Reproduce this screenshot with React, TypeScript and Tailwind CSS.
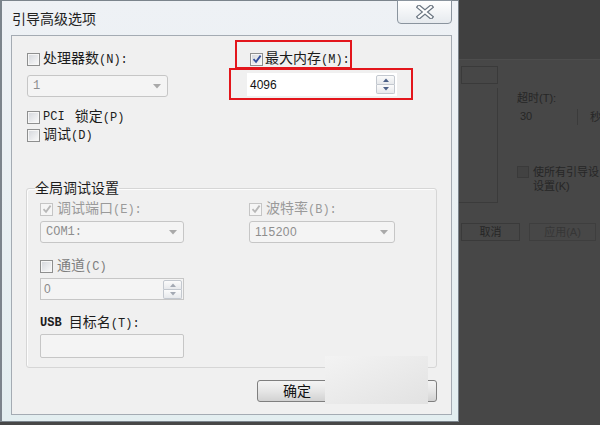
import React from "react";

type CheckProps = { checked?: boolean; disabled?: boolean };

// Win7-style 13px checkbox
function Check({ checked, disabled }: CheckProps) {
  return (
    <span
      className={
        disabled
          ? "flex h-[13px] w-[13px] shrink-0 items-center justify-center border border-[#c5c5c5] bg-[#f5f5f5]"
          : "flex h-[13px] w-[13px] shrink-0 items-center justify-center border border-[#8e8f8f] bg-gradient-to-br from-[#d3d6db] to-[#fbfbfb] shadow-[inset_0_0_0_1px_#f6f6f6]"
      }
    >
      {checked && (
        <svg width="10" height="10" viewBox="0 0 10 10">
          <path
            d="M1.5 5.2 L4 7.8 L8.6 1.6"
            fill="none"
            stroke={disabled ? "#b8b8b8" : "#34509c"}
            strokeWidth="1.8"
          />
        </svg>
      )}
    </span>
  );
}

type LabelProps = { zh: string; hot: string; tone?: string };

function Label({ zh, hot, tone = "text-[#1c1c1c]" }: LabelProps) {
  return (
    <span className={`whitespace-nowrap text-[14px] leading-[18px] ${tone}`}>
      {zh}
      <span className="font-['Liberation_Mono',monospace] text-[12px]">{hot}</span>
    </span>
  );
}

function Combo({ value, width, mono }: { value: string; width: string; mono?: boolean }) {
  return (
    <div
      className={`flex h-[22px] items-center justify-between rounded-[3px] border border-[#c6c6c6] bg-[#f4f4f4] pl-[5px] pr-[6px] text-[#8e8e8e] ${width}`}
    >
      <span
        className={
          mono
            ? "font-['Liberation_Mono',monospace] text-[12px]"
            : "text-[12px] tracking-[0.5px]"
        }
      >
        {value}
      </span>
      <svg width="8" height="5" viewBox="0 0 8 5">
        <path d="M0 0 H8 L4 4.5 Z" fill="#a9a9a9" />
      </svg>
    </div>
  );
}

function SpinButtons({ faded }: { faded?: boolean }) {
  const arrow = faded ? "#a3a9b3" : "#4b5f86";
  return (
    <div className="flex h-[19px] w-[19px] flex-col">
      <div className="flex flex-1 items-center justify-center rounded-t-[2px] border border-[#c3c8cf] bg-gradient-to-b from-[#fbfbfb] to-[#e7e9ec]">
        <svg width="6" height="4" viewBox="0 0 6 4">
          <path d="M0 4 L3 0.5 L6 4 Z" fill={arrow} />
        </svg>
      </div>
      <div className="flex flex-1 items-center justify-center rounded-b-[2px] border border-t-0 border-[#c3c8cf] bg-gradient-to-b from-[#fbfbfb] to-[#e7e9ec]">
        <svg width="6" height="4" viewBox="0 0 6 4">
          <path d="M0 0 L3 3.5 L6 0 Z" fill={arrow} />
        </svg>
      </div>
    </div>
  );
}

function Button({ text, width }: { text: string; width: string }) {
  return (
    <div
      className={`flex h-[22px] items-center justify-center rounded-[3px] border border-[#7f7f7f] bg-gradient-to-b from-[#f4f4f4] via-[#e6e6e6] to-[#d2d2d2] text-[14px] text-[#111] ${width}`}
    >
      {text}
    </div>
  );
}

function BootDialog() {
  return (
    <div className="flex h-[422px] w-[459px] shrink-0 flex-col border-b border-l-2 border-r border-t border-[#7b848c] bg-gradient-to-b from-[#eef1f5] to-[#e3eef0]">
      {/* title bar */}
      <div className="flex h-[34px] items-start justify-between">
        <span className="pl-[10px] pt-[9px] text-[14px] leading-[18px] text-[#222]">引导高级选项</span>
        <div className="-mt-px mr-[6px] flex h-[24px] w-[55px] items-center justify-center rounded-b-[4px] border border-[#8a949e] bg-gradient-to-b from-[#ffffff] to-[#e6eaee]">
          <svg width="18" height="14" viewBox="0 0 18 14">
            <path d="M3 2 L15 12 M15 2 L3 12" stroke="#6b7682" strokeWidth="4.6" strokeLinecap="square" />
            <path d="M3 2 L15 12 M15 2 L3 12" stroke="#ffffff" strokeWidth="2.2" strokeLinecap="square" />
          </svg>
        </div>
      </div>

      {/* content panel */}
      <div className="relative ml-[9px] mr-[6px] h-[380px] border border-[#a4abb3] bg-[#f0f0f0] pl-[15px] pr-[14px]">
        <div className="flex">
          <div className="flex w-[202px] flex-col">
            <div className="mt-[14px] flex h-[18px] items-center gap-[3px]">
              <Check />
              <Label zh="处理器数" hot="(N):" />
            </div>
            <div className="mt-[7px]">
              <Combo value="1" width="w-[141px]" mono />
            </div>
            <div className="mt-[11px] flex h-[18px] items-center gap-[3px]">
              <Check />
              <span className="font-['Liberation_Mono',monospace] text-[12px] text-[#1c1c1c]">PCI&nbsp;</span>
              <Label zh="锁定" hot="(P)" />
            </div>
            <div className="flex h-[18px] items-center gap-[3px]">
              <Check />
              <Label zh="调试" hot="(D)" />
            </div>
          </div>

          <div className="flex flex-col">
            <div className="ml-[6px] mt-[4px] flex h-[29px] w-[117px] items-center gap-[2px] border-2 border-[#e3161c] pl-[13px] pt-[9px]">
              <Check checked />
              <Label zh="最大内存" hot="(M):" />
            </div>
            <div className="-mt-px h-[32px] w-[184px] border-2 border-[#e3161c] pl-[16px] pt-[3px]">
              <div className="flex h-[23px] w-[150px] items-center justify-between bg-white pl-[3px] pr-[2px]">
                <span className="text-[12px] text-[#111]">4096</span>
                <SpinButtons />
              </div>
            </div>
          </div>
        </div>

        {/* global debug group */}
        <fieldset className="-ml-px mt-[35px] h-[189px] w-[411px] rounded-[3px] border border-[#d6d6d6] pl-[8px] shadow-[inset_1px_1px_0_#fdfdfd]">
          <legend className="text-[14px] leading-[18px] text-[#1c1c1c]">全局调试设置</legend>
          <div className="pl-[5px]">
            <div className="mt-[3px] grid grid-cols-[209px_auto]">
              <div className="flex h-[18px] items-center gap-[4px]">
                <Check checked disabled />
                <Label zh="调试端口" hot="(E):" tone="text-[#9a9a9a]" />
              </div>
              <div className="flex h-[18px] items-center gap-[4px]">
                <Check checked disabled />
                <Label zh="波特率" hot="(B):" tone="text-[#9a9a9a]" />
              </div>
              <div className="mt-[3px]">
                <Combo value="COM1:" width="w-[144px]" mono />
              </div>
              <div className="mt-[3px]">
                <Combo value="115200" width="w-[146px]" />
              </div>
            </div>

            <div className="mt-[14px] flex h-[18px] items-center gap-[4px]">
              <Check />
              <Label zh="通道" hot="(C)" tone="text-[#7d7d7d]" />
            </div>
            <div className="mt-[3px] flex h-[22px] w-[144px] items-center justify-between border border-[#c6c6c6] bg-[#f4f4f4] pl-[3px] pr-px">
              <span className="text-[12px] text-[#8a8a8a]">0</span>
              <SpinButtons faded />
            </div>

            <div className="mt-[14px] flex h-[18px] items-center">
              <span className="font-['Liberation_Mono',monospace] text-[12px] font-bold text-[#1c1c1c]">USB&nbsp;</span>
              <Label zh="目标名" hot="(T):" />
            </div>
            <div className="mt-[2px] h-[24px] w-[144px] rounded-[2px] border border-[#c6c6c6] bg-[#f4f4f4]" />
          </div>
        </fieldset>

        <div className="mt-[12px] flex justify-end gap-[8px]">
          <Button text="确定" width="w-[80px]" />
          <Button text="取消" width="w-[92px]" />
        </div>

        {/* light patch over the lower buttons */}
        <div className="absolute left-[313px] top-[320px] h-[48px] w-[103px] bg-gradient-to-br from-[#f3f3f3] to-[#e2e2e2]" />
      </div>
    </div>
  );
}

// the dimmed parent window on the right
function ParentWindow() {
  const ink = "text-[#262626]";
  return (
    <div className="flex flex-1 flex-col text-[11px] leading-[14px]">
      <div className="h-[60px] border-b border-[#4d4d4d] bg-[#404040]" />
      <div className="ml-[2px] mt-[6px] h-[18px] w-[37px] border border-[#3a3a3a]" />
      <div className="mt-[4px] flex">
        <div className="h-[115px] w-[39px] border-b border-r border-[#3b3b3b]" />
        <div className="flex flex-1 flex-col pl-[19px]">
          <span className={`mt-[3px] whitespace-nowrap ${ink}`}>超时(T):</span>
          <div className="mt-[4px] flex items-center">
            <span className={`h-[16px] w-[61px] border-r border-[#3b3b3b] pl-[3px] ${ink}`}>30</span>
            <span className={`ml-[12px] ${ink}`}>秒</span>
          </div>
          <div className="mt-[40px] flex items-start gap-[4px]">
            <span className="mt-px h-[12px] w-[12px] shrink-0 border border-[#3a3a3a] bg-[#424242]" />
            <span className={`whitespace-nowrap ${ink}`}>
              使所有引导设
              <br />
              设置(K)
            </span>
          </div>
        </div>
      </div>
      <div className="ml-[2px] mt-[20px] flex gap-[9px]">
        <div className={`flex h-[18px] w-[59px] items-center justify-center border border-[#3a3a3a] ${ink}`}>取消</div>
        <div className="flex h-[18px] w-[67px] items-center justify-center border border-[#3e3e3e] text-[#363636]">应用(A)</div>
      </div>
    </div>
  );
}

export default function App() {
  return (
    <div className="flex h-[425px] w-[600px] overflow-hidden bg-[#474747] font-['Liberation_Sans','Noto_Sans_CJK_SC',sans-serif]">
      <BootDialog />
      <ParentWindow />
    </div>
  );
}
